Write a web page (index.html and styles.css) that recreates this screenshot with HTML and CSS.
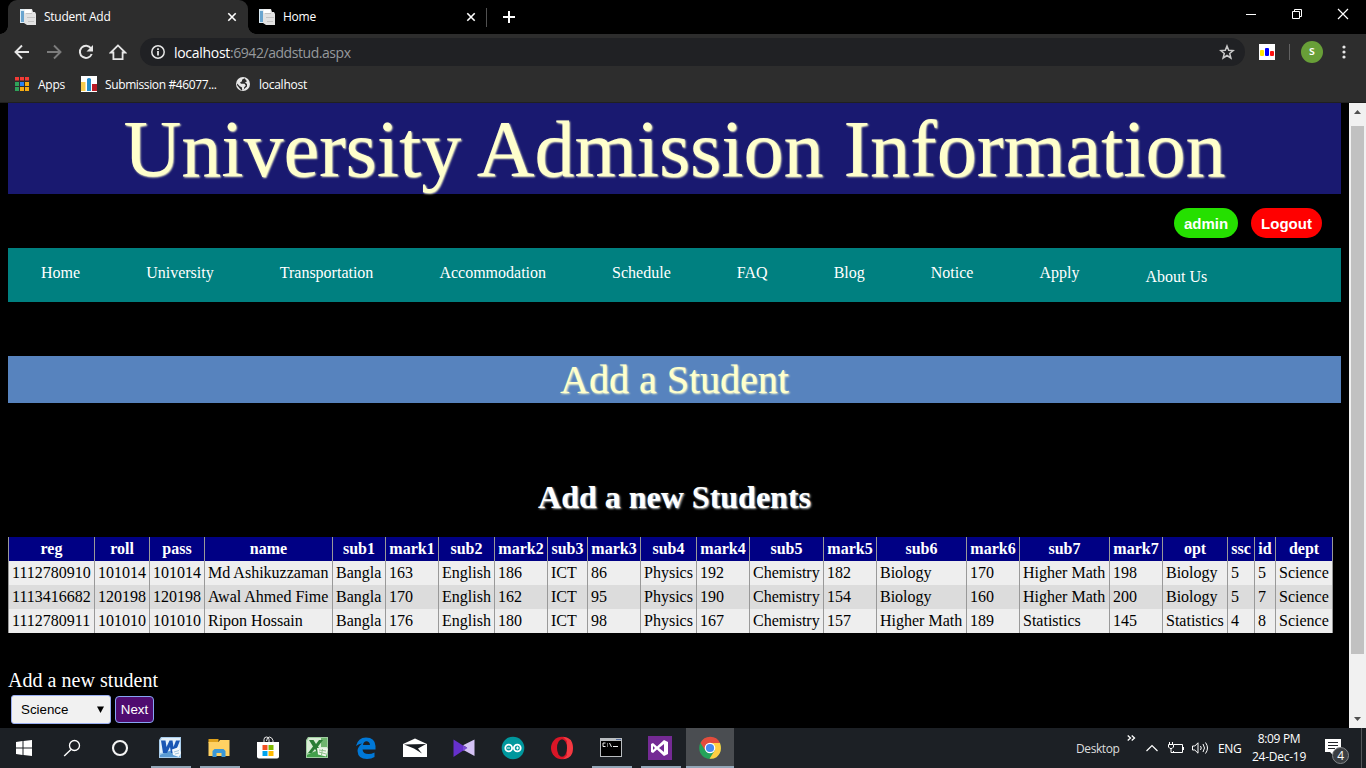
FILE: index.html
```html
<!DOCTYPE html>
<html lang="en">
<head>
<meta charset="utf-8">
<title>Student Add</title>
<link rel="stylesheet" href="styles.css">
</head>
<body>
<svg width="0" height="0" class="defs">
  <defs>
    <symbol id="page" viewBox="0 0 16 16">
      <path d="M0 0h6v14H0z" fill="#dcebf4"/><path d="M1 2h3.500v11H1z" fill="#6aa5cf"/>
      <path d="M4 0h8l1 3h2l1 2v11H7l-3-2z" fill="#e2e2e2"/><path d="M4.500.5h7V4h-7z" fill="#fff"/>
      <path d="M6 4.500h6M7 8.500h8M8 12.500h6" stroke="#c4c4c4"/>
    </symbol>
    <symbol id="cross" viewBox="0 0 10 10"><path d="M1.300 1.300l7.400 7.400M8.700 1.300L1.300 8.700" stroke="#fff" stroke-width="1.600"/></symbol>
  </defs>
</svg>

<header class="browser">
  <div class="tabs">
    <div class="tab active"><svg width="16" height="16"><use href="#page"/></svg><span class="tab-name">Student Add</span><svg width="10" height="10"><use href="#cross"/></svg></div>
    <div class="tab"><svg width="16" height="16"><use href="#page"/></svg><span class="tab-name">Home</span><svg width="10" height="10"><use href="#cross"/></svg></div>
    <span class="tab-line"></span>
    <svg class="plus" width="12" height="12" viewBox="0 0 12 12"><path d="M6 0v12M0 6h12" stroke="#fff" stroke-width="2"/></svg>
    <div class="window-buttons">
      <svg width="12" height="12" viewBox="0 0 12 12"><path d="M1 6.500h10" stroke="#fff"/></svg>
      <svg width="12" height="12" viewBox="0 0 12 12"><path d="M1.500 3.500h7v7h-7zM3.500 3V1.500h7v7H9" fill="none" stroke="#fff"/></svg>
      <svg width="12" height="12" viewBox="0 0 12 12"><path d="M1 1l10 10M11 1L1 11" stroke="#fff" stroke-width="1.200"/></svg>
    </div>
  </div>
  <div class="toolbar">
    <div class="tools">
      <svg width="16" height="16" viewBox="0 0 16 16"><path d="M15 8H2M8 1.500L1.500 8 8 14.500" fill="none" stroke="#e6e6e6" stroke-width="1.900"/></svg>
      <svg width="16" height="16" viewBox="0 0 16 16"><path d="M1 8h13M8 1.500L14.500 8 8 14.500" fill="none" stroke="#7c7c7c" stroke-width="1.900"/></svg>
      <svg width="16" height="16" viewBox="0 0 16 16"><path d="M13 4.300A6.100 6.100 0 1 0 13.700 10" fill="none" stroke="#e6e6e6" stroke-width="2"/><path d="M15 1v6.500H8.500z" fill="#e6e6e6"/></svg>
      <svg class="home" width="18" height="16" viewBox="0 0 18 16"><path d="M9 1.400L1.800 8.500h2.600v6.600h9.200V8.500h2.600z" fill="none" stroke="#e6e6e6" stroke-width="1.800"/></svg>
    </div>
    <div class="address">
      <svg width="14" height="14" viewBox="0 0 14 14"><circle cx="7" cy="7" r="6.200" fill="none" stroke="#e6e6e6" stroke-width="1.500"/><path d="M7 6v4.500M7 3.300v1.600" stroke="#e6e6e6" stroke-width="1.800"/></svg>
      <span class="url"><b>localhost</b>:6942/addstud.aspx</span>
      <svg class="star" width="16" height="16" viewBox="0 0 16 16"><path d="M8 2l1.700 4.300 4.500.3-3.500 2.900 1.200 4.500L8 11.500 4.100 14l1.200-4.500L1.800 6.600l4.500-.3z" fill="none" stroke="#c9c9c9" stroke-width="1.500"/></svg>
    </div>
    <svg class="extension" width="16" height="16" viewBox="0 0 16 16"><path d="M0 0h16v16H0z" fill="#fff"/><rect x="1" y="6" width="4" height="6" rx="1" fill="#ffe500"/><rect x="6" y="4" width="4" height="8" rx="1" fill="#00f"/><rect x="11" y="7" width="4" height="5" rx="1" fill="#f11"/></svg>
    <span class="tool-line"></span>
    <span class="avatar">s</span>
    <svg class="dots" width="4" height="14" viewBox="0 0 4 14"><g fill="#e6e6e6"><circle cx="2" cy="2" r="1.600"/><circle cx="2" cy="7" r="1.600"/><circle cx="2" cy="12" r="1.600"/></g></svg>
  </div>
  <div class="bookmarks">
    <svg width="14" height="14" viewBox="0 0 14 14"><path d="M0 0h4v3.500H0zM5 0h4v3.500H5zM10 0h4v3.500h-4z" fill="#f33b36"/><path d="M0 5h4v4H0zM0 10h4v4H0z" fill="#2fa35a"/><path d="M5 5h4v4H5z" fill="#2b83f5"/><path d="M10 5h4v4h-4zM5 10h4v4H5zM10 10h4v4h-4z" fill="#f7ad13"/></svg>
    <span class="mark apps">Apps</span>
    <svg width="16" height="16" viewBox="0 0 16 16"><path d="M0 0h16v16H0z" fill="#fff"/><path d="M0 6h4.500v9H0z" fill="#f6cb4f"/><path d="M6 3q2-2 4 0v12H6z" fill="#218ccb"/><path d="M11 8h5v7h-5z" fill="#b81b25"/></svg>
    <span class="mark submission">Submission #46077...</span>
    <svg width="14" height="14" viewBox="0 0 14 14"><circle cx="7" cy="7" r="7" fill="#e6e6e6"/><path d="M8.500 1.200L6 2.800v1.500L4 5.500l1 1.300h3.500l1.300 1.700-1.800 2v1.700L6 13v-2.500L3.800 9.200 1.200 6.500 1 8l2.300 3 2 2.200L7 13l4-3.500V7L9 5.500l2-1.200z" fill="#2d2d2d"/></svg>
    <span class="mark">localhost</span>
  </div>
</header>

<div class="viewport">
  <main class="site">
    <h1 class="title">University Admission Information</h1>
    <div class="account"><a class="pill green">admin</a><a class="pill red">Logout</a></div>
    <nav class="menu"><a>Home</a><a>University</a><a>Transportation</a><a>Accommodation</a><a>Schedule</a><a>FAQ</a><a>Blog</a><a>Notice</a><a>Apply</a><a class="about">About Us</a></nav>
    <h2 class="banner">Add a Student</h2>
    <h3 class="heading">Add a new Students</h3>
    <table class="students">
      <colgroup><col class="w86"><col class="w55"><col class="w55"><col class="w128"><col class="w53"><col class="w53"><col class="w56"><col class="w53"><col class="w40"><col class="w53"><col class="w56"><col class="w53"><col class="w74"><col class="w53"><col class="w90"><col class="w53"><col class="w90"><col class="w53"><col class="w65"><col class="w27"><col class="w21"><col class="w57"></colgroup>
      <tr><th>reg</th><th>roll</th><th>pass</th><th>name</th><th>sub1</th><th>mark1</th><th>sub2</th><th>mark2</th><th>sub3</th><th>mark3</th><th>sub4</th><th>mark4</th><th>sub5</th><th>mark5</th><th>sub6</th><th>mark6</th><th>sub7</th><th>mark7</th><th>opt</th><th>ssc</th><th>id</th><th>dept</th></tr>
      <tr><td>1112780910</td><td>101014</td><td>101014</td><td>Md Ashikuzzaman</td><td>Bangla</td><td>163</td><td>English</td><td>186</td><td>ICT</td><td>86</td><td>Physics</td><td>192</td><td>Chemistry</td><td>182</td><td>Biology</td><td>170</td><td>Higher Math</td><td>198</td><td>Biology</td><td>5</td><td>5</td><td>Science</td></tr>
      <tr class="alt"><td>1113416682</td><td>120198</td><td>120198</td><td>Awal Ahmed Fime</td><td>Bangla</td><td>170</td><td>English</td><td>162</td><td>ICT</td><td>95</td><td>Physics</td><td>190</td><td>Chemistry</td><td>154</td><td>Biology</td><td>160</td><td>Higher Math</td><td>200</td><td>Biology</td><td>5</td><td>7</td><td>Science</td></tr>
      <tr><td>1112780911</td><td>101010</td><td>101010</td><td>Ripon Hossain</td><td>Bangla</td><td>176</td><td>English</td><td>180</td><td>ICT</td><td>98</td><td>Physics</td><td>167</td><td>Chemistry</td><td>157</td><td>Higher Math</td><td>189</td><td>Statistics</td><td>145</td><td>Statistics</td><td>4</td><td>8</td><td>Science</td></tr>
    </table>
    <p class="prompt">Add a new student</p>
    <div class="form">
      <div class="select">Science<svg width="7" height="7" viewBox="0 0 7 7"><path d="M0 .5h7L3.500 7z" fill="#000"/></svg></div>
      <button class="next">Next</button>
    </div>
  </main>
  <div class="scrollbar">
    <svg width="17" height="23" viewBox="0 0 17 23"><path d="M5 11l3.500-4 3.500 4z" fill="#505050"/></svg>
    <div class="thumb"></div>
    <svg class="down" width="17" height="17" viewBox="0 0 17 17"><path d="M5 6l3.500 4L12 6z" fill="#505050"/></svg>
  </div>
</div>

<footer class="taskbar">
  <div class="start">
    <span class="task"><svg width="16" height="16" viewBox="0 0 16 16"><path d="M0 2l6.500-.9v6.400H0zM7.500 1L16 0v7.500H7.500zM0 8.500h6.500v6.400L0 14zM7.500 8.500H16V16l-8.500-1z" fill="#fff"/></svg></span>
    <span class="task"><svg width="18" height="18" viewBox="0 0 18 18"><circle cx="11.500" cy="6.500" r="5" fill="none" stroke="#fff" stroke-width="1.300"/><path d="M8 10.500L1.200 17" stroke="#fff" stroke-width="1.400"/></svg></span>
    <span class="task"><svg width="18" height="18" viewBox="0 0 18 18"><circle cx="9" cy="9" r="7" fill="none" stroke="#f4f4f4" stroke-width="2.100"/></svg></span>
  </div>
  <div class="running">
    <span class="task open"><svg width="24" height="24" viewBox="0 0 24 24"><path d="M3 1h20v21H1V4z" fill="#a9cdec"/><path d="M4 2h18v11L2 17V5z" fill="#e3f0fa"/><path d="M2 19q9-5 20-6v8H2z" fill="#5c9bd2"/><path d="M3 4.500h4.500l1 6.500 3-6.500h3l1 6.500 2.500-6.500H22L17 17h-4l-1-6-3 6H5z" fill="#1a56b4"/><path d="M14 13.500l7-2.500 2 6-2 4-6-2z" fill="#f2f7fb"/><path d="M16 16l5-1.500M17 18l4-1" stroke="#9fc2de"/></svg></span>
    <span class="task open"><svg width="24" height="24" viewBox="0 0 24 24"><path d="M1.500 3h10v4h-10z" fill="#dfa11b"/><path d="M1.500 6h10l1.500-2h9.500v16h-21z" fill="#ffd163"/><path d="M5.500 21v-6l2-2h9l2 2v6h-4v-4h-5v4z" fill="#3997d8"/></svg></span>
    <span class="task"><svg width="24" height="24" viewBox="0 0 24 24"><path d="M8 7V3.500Q8 1 10.500 1T13 3.500V7M10.500 5Q11 .8 13.500 1T17 4.500V7" fill="none" stroke="#e8e8e8"/><path d="M1 6h22v14.500q0 2-2 2H3q-2 0-2-2z" fill="#fff"/><path d="M6.500 9h5v5h-5z" fill="#f25022"/><path d="M12.500 9h5v5h-5z" fill="#7fba00"/><path d="M6.500 15h5v5h-5z" fill="#00a4ef"/><path d="M12.500 15h5v5h-5z" fill="#ffb900"/></svg></span>
    <span class="task"><svg width="24" height="24" viewBox="0 0 24 24"><path d="M3 1h20v21H1V4z" fill="#9fcea0"/><path d="M4 2h18v11L2 17V5z" fill="#d9ecd6"/><path d="M16 2h6v9h-6z" fill="#6fb56e"/><path d="M2 19q9-5 20-6v8H2z" fill="#43a04b"/><path d="M4 4h4.500l2.500 4 3-4h4l-5 6.500 4 6.500h-4.500l-2.500-4-3.500 4H3l5-6.500z" fill="#2a7d35"/><path d="M12 12l11 .5-2 8-8-2z" fill="#f0f7ec"/><path d="M14 14l7 1M14 16l7 2M17.500 13l-1 6" stroke="#8fc08b"/></svg></span>
    <span class="task"><svg width="24" height="24" viewBox="0 0 24 24"><path d="M2 10Q4 1.500 12 1.500q9 0 9.500 8.500v3.500H8.500q.5 4.500 6 4.500 3 0 6-1.500V21q-3 2-7.500 2Q4 23 3.500 15q0-4 4.500-7.500Q5 7.500 2 10zm7-1h7q-.5-3.700-3.500-3.700T9 9z" fill="#0078d7" fill-rule="evenodd"/></svg></span>
    <span class="task"><svg width="24" height="24" viewBox="0 0 24 24"><path d="M0 8l12-5.500L24 8v13H0z" fill="#fff"/><path d="M1 8.500l22-.5-8 4.500 4 5-8-5z" fill="#171b20"/></svg></span>
    <span class="task"><svg width="24" height="24" viewBox="0 0 24 24"><path d="M1.500 3.500L15 12 1.500 21z" fill="#6630cc"/><path d="M22.500 3.500V20L11 13.800l4-2.300-4-2.300z" fill="#d4c2f5"/><path d="M11 9.500l4.500 2.500-4.500 3z" fill="#7a49d6"/></svg></span>
    <span class="task"><svg width="24" height="24" viewBox="0 0 24 24"><circle cx="12" cy="12" r="11.300" fill="#00979d"/><circle cx="7.700" cy="12" r="3.400" fill="none" stroke="#fff" stroke-width="1.800"/><circle cx="16.300" cy="12" r="3.400" fill="none" stroke="#fff" stroke-width="1.800"/><path d="M6 12h3M15 12h3M16.500 10.500v3" stroke="#fff"/></svg></span>
    <span class="task"><svg width="24" height="24" viewBox="0 0 24 24"><ellipse cx="12" cy="12" rx="11" ry="11.300" fill="#d91627"/><path d="M13 .7q10 .5 10 11.300T13 23.300l4-4V5z" fill="#f43a42"/><ellipse cx="12" cy="12" rx="5" ry="8.800" fill="#1c2025"/></svg></span>
    <span class="task open"><svg width="24" height="24" viewBox="0 0 24 24"><path d="M1 2h22v19H1z" fill="#b9bdc0"/><path d="M2 5h20v15H2z" fill="#000"/><path d="M6.500 7H4v3.500h2.500M8.500 7.500v1M8.500 9.500v1M10.500 7l2 4M14 10.500h5" fill="none" stroke="#eee"/><path d="M17 3.500h5" stroke="#536c9e"/></svg></span>
    <span class="task open"><svg width="24" height="24" viewBox="0 0 24 24"><path d="M0 0h24v24H0z" fill="#742a94"/><path d="M3 8l2-1 4 3.500L16 4l4 2v12l-4 2-7-6.500L5 17l-2-1zm2 2v4l2-2zm6 2l5 4V8z" fill="#fff" fill-rule="evenodd"/></svg></span>
    <span class="task open current"><svg width="24" height="24" viewBox="0 0 24 24"><circle cx="12" cy="12" r="10.800" fill="#24a35a"/><path d="M2.500 7A10.800 10.800 0 0 1 22 7H12l-5 7z" fill="#e34c3d"/><path d="M12 7h10q3 9-3.500 14.200-3 2-7 1.600L17 14z" fill="#ffce43"/><circle cx="12" cy="12" r="5.300" fill="#fff"/><circle cx="12" cy="12" r="4.100" fill="#4688f1"/></svg></span>
  </div>
  <div class="tray">
    <span class="desktop">Desktop</span>
    <svg class="more" width="9" height="6" viewBox="0 0 9 6"><path d="M.7.500L3.500 3 .7 5.500M4.700.500L7.500 3 4.700 5.500" fill="none" stroke="#fff" stroke-width="1.300"/></svg>
    <svg class="chevron" width="12" height="8" viewBox="0 0 12 8"><path d="M.5 7L6 1.500 11.500 7" fill="none" stroke="#fff" stroke-width="1.200"/></svg>
    <svg class="battery" width="16" height="12" viewBox="0 0 16 12"><path d="M6 2.500h8.500v8h-9V9M15.500 5v3M1.500 0v2M4.500 0v2M.5 2.500h5v2.500L4 6.500H2L.5 5zM3 6.500v4h3" fill="none" stroke="#fff"/></svg>
    <svg class="speaker" width="17" height="14" viewBox="0 0 17 14"><path d="M.5 5h2.300L6 1.800v10.400L2.800 9H.5zM8.500 5q1.500 2 0 4M11 3q3 4 0 8M13.500 1.500q4 5.500 0 11" fill="none" stroke="#fff"/></svg>
    <span class="lang">ENG</span>
    <span class="clock"><span>8:09 PM</span><span class="date">24-Dec-19</span></span>
    <span class="notice"><svg width="16" height="17" viewBox="0 0 16 17"><path d="M0 0h16v13H8v3l-3-3H0z" fill="#fff"/><path d="M3 3.500h10M3 6.500h10M3 9.500h7" stroke="#22262b"/></svg><span class="badge">4</span></span>
    <span class="show-desktop"></span>
  </div>
</footer>
</body>
</html>
```

FILE: styles.css
```css
* { box-sizing: border-box; }
body { margin: 0; width: 1366px; height: 768px; overflow: hidden; background: #000; font-family: "Liberation Serif", serif; display: flex; flex-direction: column; }
svg { display: block; flex: none; }
.defs { position: absolute; }

.browser { height: 103px; flex: none; background: #2d2d2d; border-bottom: 1px solid #202020; font: 12px "Open Sans", sans-serif; color: #fff; }
.tabs { height: 34px; background: #000; display: flex; align-items: center; padding-left: 8px; }
.tab { width: 239px; height: 34px; display: flex; align-items: center; padding: 0 11px 0 11px; }
.tab.active { position: relative; width: 240px; background: #2d2d2d; border-radius: 9px 9px 0 0; padding: 0 11px 0 12px; }
.tab.active::before, .tab.active::after { content: ""; position: absolute; bottom: 0; width: 8px; height: 8px; }
.tab.active::before { left: -8px; background: radial-gradient(circle at 0 0, #000 7.5px, #2d2d2d 8px); }
.tab.active::after { right: -8px; background: radial-gradient(circle at 100% 0, #000 7.5px, #2d2d2d 8px); }
.tab-name { flex: 1; padding-left: 8px; letter-spacing: -.26px; line-height: 16px; }
.tab-line { width: 1px; height: 19px; background: #505050; margin: 0 16px 0 -1px; }
.window-buttons { margin: -6px 17px 0 auto; display: flex; gap: 34px; }
.toolbar { height: 36px; display: flex; align-items: center; padding-left: 14px; }
.tools { width: 126px; display: flex; gap: 16px; align-items: center; }
.home { margin-left: -1px; }
.address { width: 1105px; height: 28px; border-radius: 14px; background: #202124; display: flex; align-items: center; padding: 0 10px 0 11px; }
.url { flex: 1; padding-left: 9px; font-size: 14px; color: #96999c; letter-spacing: -.44px; }
.url b { font-weight: 400; color: #fff; letter-spacing: -.3px; }
.extension { margin-left: 14px; }
.tool-line { width: 1px; height: 16px; background: #616161; margin: 0 11px 0 14px; }
.avatar { width: 22px; height: 22px; border-radius: 50%; background: #689f38; text-align: center; line-height: 20px; font-size: 12px; font-weight: 600; }
.dots { margin-left: 19px; }
.bookmarks { height: 28px; display: flex; align-items: center; padding-left: 15px; }
.mark { margin-left: 9px; letter-spacing: -.26px; }
.apps { width: 43px; margin-right: -1px; }
.submission { margin-left: 8px; width: 131px; letter-spacing: -.38px; }
.apps + svg { margin-left: 1px; }

.viewport { height: 625px; flex: none; display: flex; overflow: hidden; }
.site { width: 1349px; padding: 0 8px; color: #fff; }
.title, .banner, .heading, .prompt { margin: 0; font-weight: 400; text-align: center; }
.title { height: 91px; line-height: 92px; font-size: 80px; color: #ffffcc; background: #191970; text-shadow: 1px 1px 2px #ffffcc; }
.account { height: 54px; display: flex; justify-content: flex-end; gap: 13px; padding: 14px 19px 0 0; }
.pill { height: 30px; border-radius: 15px; text-align: center; font: bold 15px/31px "Liberation Sans", sans-serif; }
.green { width: 64px; background: #25e000; }
.red { width: 71px; background: #f00; }
.menu { height: 54px; background: #008080; display: flex; font-size: 16px; line-height: 18px; }
.menu a { padding: 16px 33.020px; }
.menu .about { padding-top: 20px; }
.banner { height: 47px; line-height: 47px; margin-top: 54px; background: #5783be; color: #ffffcc; font-size: 40px; text-shadow: 1px 1px 2px #ffffcc; }
.heading { margin-top: 76px; height: 58px; line-height: 36px; font-size: 32px; font-weight: 700; text-shadow: 1px 1px 2px #c9d0d0; }
.students { width: 1325px; table-layout: fixed; border-collapse: separate; border-spacing: 0; border-right: 1px solid #999; font-size: 16px; color: #000; background: #eee; }
.students tr { height: 24px; }
.students .alt { background: #dcdcdc; }
.students th, .students td { border-left: 1px solid #999; padding: 0 3px; white-space: nowrap; line-height: 24px; }
.students th { background: #000084; color: #fff; padding: 0; }
.w86 { width: 86px; } .w55 { width: 55px; } .w128 { width: 128px; } .w53 { width: 53px; } .w56 { width: 56px; } .w40 { width: 40px; }
.w74 { width: 74px; } .w90 { width: 90px; } .w65 { width: 65px; } .w27 { width: 27px; } .w21 { width: 21px; } .w57 { width: 57px; }
.prompt { text-align: left; font-size: 20px; line-height: 23px; margin-top: 36px; letter-spacing: .04px; }
.form { display: flex; align-items: center; gap: 4px; padding: 3px; font: 13.333px "Liberation Sans", sans-serif; }
.select { width: 100px; height: 29px; background: #f1f1f1; color: #000; border: 1px solid #9aaef0; border-radius: 3px; padding: 0 6px 1px 9px; display: flex; align-items: center; justify-content: space-between; }
.next { width: 39px; height: 27px; padding: 0 0 1px; background: #4f0c70; color: #fff; border: 1px solid #86a5f4; border-radius: 4px; font: 13.333px "Liberation Sans", sans-serif; }
.scrollbar { width: 17px; background: #f1f1f1; display: flex; flex-direction: column; }
.thumb { width: 13px; height: 528px; background: #c1c1c1; margin-left: 2px; }
.down { margin-top: auto; }

.taskbar { height: 40px; flex: none; background: #1c2025; display: flex; color: #fff; font: 12px "Open Sans", sans-serif; }
.start, .running { display: flex; }
.running { gap: 1px; margin-left: 3px; }
.task { width: 48px; height: 40px; display: flex; align-items: center; justify-content: center; }
.running .task { padding: 0 2px 1px 0; }
.running .current { padding-right: 0; }
.open { background: linear-gradient(#93a7b8, #93a7b8) center bottom / 40px 2px no-repeat; }
.current { background: linear-gradient(#93a7b8, #93a7b8) center bottom / 48px 2px no-repeat #4a4d51; }
.tray { flex: 1; display: flex; align-items: center; padding-left: 342px; letter-spacing: -.4px; }
.desktop { width: 43px; color: #ddd; }
.more { margin: -20px 0 0 8px; }
.chevron { margin-left: 10px; }
.battery { margin-left: 10px; }
.speaker { margin-left: 8px; }
.lang { margin-left: 9px; width: 23px; }
.clock { margin-left: 9px; width: 58px; display: flex; flex-direction: column; text-align: center; line-height: 18px; white-space: nowrap; letter-spacing: -.35px; }
.date { letter-spacing: -.25px; }
.notice { position: relative; margin: -2px 0 0 17px; }
.badge { position: absolute; left: 7px; top: 8px; width: 17px; height: 17px; border-radius: 50%; background: #3b3e42; border: 1px solid #85888b; text-align: center; line-height: 15px; font-size: 12px; }
.show-desktop { width: 1px; height: 40px; background: #54575b; margin-left: 20px; }
```
